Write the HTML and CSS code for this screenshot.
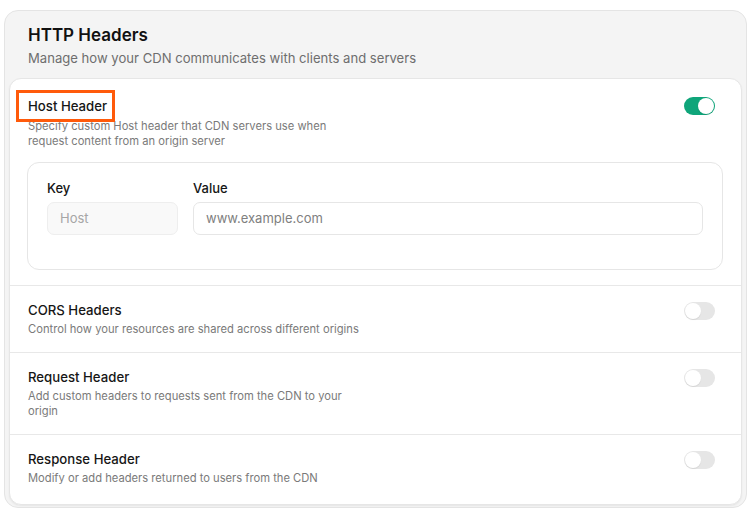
FILE: index.html
```html
<!DOCTYPE html>
<html lang="en">
<head>
<meta charset="utf-8">
<title>HTTP Headers</title>
<link rel="stylesheet" href="styles.css">
</head>
<body>
<section class="panel">
  <header class="panel-head">
    <h1 class="panel-title">HTTP Headers</h1>
    <p class="panel-sub">Manage how your CDN communicates with clients and servers</p>
  </header>
  <div class="card">
    <div class="row row-first">
      <div class="row-top">
        <div class="row-text">
          <h2 class="row-title">Host Header</h2>
          <p class="row-desc">Specify custom Host header that CDN servers use when request content from an origin server</p>
        </div>
        <span class="toggle on"><span class="knob"></span></span>
      </div>
      <span class="highlight"></span>
      <div class="kv-box">
        <div class="kv-grid">
          <label class="kv-label">Key</label>
          <label class="kv-label">Value</label>
          <div class="input input-disabled">Host</div>
          <div class="input">www.example.com</div>
        </div>
      </div>
    </div>
    <div class="row">
      <div class="row-top">
        <div class="row-text">
          <h2 class="row-title">CORS Headers</h2>
          <p class="row-desc wide">Control how your resources are shared across different origins</p>
        </div>
        <span class="toggle"><span class="knob"></span></span>
      </div>
    </div>
    <div class="row">
      <div class="row-top">
        <div class="row-text">
          <h2 class="row-title">Request Header</h2>
          <p class="row-desc">Add custom headers to requests sent from the CDN to your origin</p>
        </div>
        <span class="toggle"><span class="knob"></span></span>
      </div>
    </div>
    <div class="row row-last">
      <div class="row-top">
        <div class="row-text">
          <h2 class="row-title">Response Header</h2>
          <p class="row-desc wide">Modify or add headers returned to users from the CDN</p>
        </div>
        <span class="toggle"><span class="knob"></span></span>
      </div>
    </div>
  </div>
</section>
</body>
</html>
```
FILE: styles.css
```css
* { box-sizing: border-box; }
html, body { margin: 0; padding: 0; background: #ffffff; }
body {
  font-family: Inter, "Noto Sans", "Liberation Sans", sans-serif;
  color: #151515;
  padding: 10px 0 0 4px;
}
.panel {
  width: 743px;
  background: #f4f4f4;
  border: 1px solid #e4e4e4;
  border-radius: 14px;
  padding: 0 4px 2px 4px;
}
.panel-head {
  padding: 12px 19px 10px 19px;
}
.panel-title {
  margin: 0;
  font-size: 17px;
  line-height: 24px;
  font-weight: 600;
  color: #111111;
}
.panel-sub {
  margin: 1px 0 0 0;
  font-size: 13.1px;
  line-height: 20px;
  color: #6e6e6e;
}
.card {
  background: #ffffff;
  border: 1px solid #e6e6e6;
  border-radius: 12px;
  box-shadow: 0 1px 2px rgba(0,0,0,0.06);
}
.row {
  position: relative;
  padding: 14px 26px 15px 18px;
  border-top: 1px solid #e8e8e8;
}
.row-first { border-top: none; padding-top: 17px; padding-bottom: 15px; }
.row-last { padding-bottom: 18px; }
.row-top {
  display: flex;
  justify-content: space-between;
  align-items: flex-start;
}
.row-title {
  margin: 0;
  font-size: 13.2px;
  line-height: 20px;
  font-weight: 500;
  color: #161616;
}
.row-desc {
  margin: 2px 0 0 0;
  font-size: 11.2px;
  line-height: 15px;
  color: #7a7a7a;
  max-width: 330px;
}
.row-first .row-desc { margin-top: 3px; }
.row-desc.wide { max-width: 400px; }
.toggle {
  margin-top: 2px;
  width: 31px;
  height: 18px;
  border-radius: 9px;
  background: #e6e6e6;
  display: flex;
  align-items: center;
  padding: 0 1px;
  flex-shrink: 0;
}
.row-first .toggle { margin-top: 1px; }
.toggle .knob {
  width: 16px;
  height: 16px;
  border-radius: 50%;
  background: #ffffff;
  box-shadow: 0 1px 1px rgba(0,0,0,0.08);
}
.toggle.on {
  background: #0fa57a;
  justify-content: flex-end;
}
.highlight {
  position: absolute;
  left: 6px;
  top: 11px;
  width: 99px;
  height: 32px;
  border: 3px solid #ff5a0a;
  pointer-events: none;
}
.kv-box {
  margin: 13px -8px 0 -1px;
  border: 1px solid #e6e6e6;
  border-radius: 12px;
  padding: 16px 19px 34px 19px;
}
.kv-grid {
  display: grid;
  grid-template-columns: 131px 1fr;
  column-gap: 15px;
  row-gap: 5px;
}
.kv-label {
  font-size: 13px;
  line-height: 18px;
  font-weight: 500;
  color: #161616;
}
.input {
  height: 33px;
  border: 1px solid #e6e6e6;
  border-radius: 7px;
  background: #ffffff;
  font-size: 13px;
  line-height: 31px;
  color: #808080;
  padding: 0 12px;
}
.input-disabled {
  background: #f9f9f9;
  border-color: #eeeeee;
  color: #a6a6a6;
}
```
